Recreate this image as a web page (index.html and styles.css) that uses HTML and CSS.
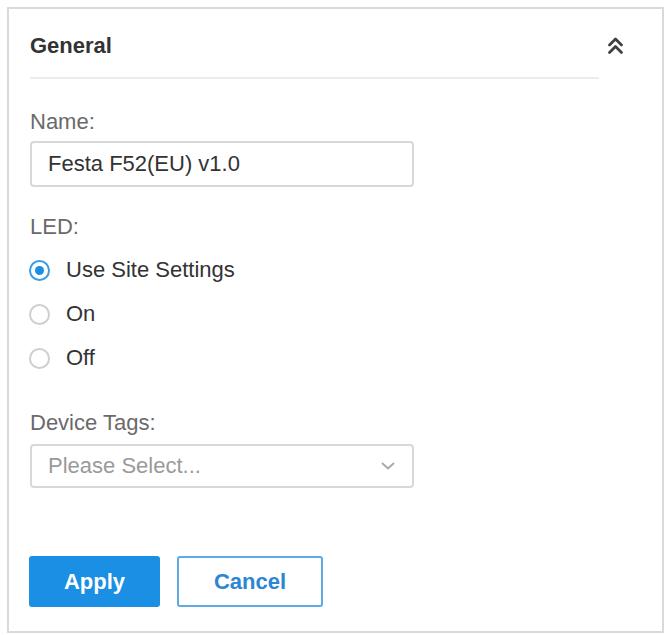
FILE: index.html
```html
<!DOCTYPE html>
<html lang="en">
<head>
<meta charset="utf-8">
<title>General</title>
<link rel="stylesheet" href="styles.css">
</head>
<body>
<section class="panel">
  <header class="panel-header">
    <div class="panel-title">General</div>
    <button class="collapse" type="button" aria-label="Collapse">
      <svg width="17" height="19" viewBox="0 0 17 19" fill="none" stroke="#404040" stroke-width="2.8" stroke-linecap="round" stroke-linejoin="round">
        <path d="M2.5 9 L8.5 3 L14.5 9"/>
        <path d="M2.5 16.5 L8.5 10.5 L14.5 16.5"/>
      </svg>
    </button>
  </header>

  <div class="field">
    <label class="field-label">Name:</label>
    <div class="input">Festa F52(EU) v1.0</div>
  </div>

  <div class="field field-led">
    <label class="field-label">LED:</label>
    <div class="radio-group">
      <div class="radio-row"><span class="radio checked"></span><span class="radio-text">Use Site Settings</span></div>
      <div class="radio-row"><span class="radio"></span><span class="radio-text">On</span></div>
      <div class="radio-row"><span class="radio"></span><span class="radio-text">Off</span></div>
    </div>
  </div>

  <div class="field field-tags">
    <label class="field-label">Device Tags:</label>
    <div class="input select">
      <span class="placeholder">Please Select...</span>
      <svg class="caret" width="14" height="8" viewBox="0 0 14 8" fill="none" stroke="#a8a8a8" stroke-width="1.8" stroke-linecap="round" stroke-linejoin="round">
        <path d="M1.5 1.5 L7 6.5 L12.5 1.5"/>
      </svg>
    </div>
  </div>

  <div class="actions">
    <button class="btn btn-primary" type="button">Apply</button>
    <button class="btn btn-outline" type="button">Cancel</button>
  </div>
</section>
</body>
</html>
```

FILE: styles.css
```css
html, body {
  margin: 0;
  padding: 0;
  background: #ffffff;
}

body {
  font-family: "Liberation Sans", Arial, sans-serif;
  font-size: 22px;
  color: #333333;
}

.panel {
  box-sizing: border-box;
  width: 657px;
  height: 626px;
  margin: 7px 0 0 7px;
  border: 2px solid #dadada;
  padding: 0 0 0 21px;
  background: #ffffff;
}

.panel-header {
  display: flex;
  align-items: flex-start;
}

.panel-title {
  flex: 1;
  padding: 22px 0 16px 0;
  line-height: 30px;
  font-weight: bold;
  color: #333333;
  border-bottom: 2px solid #ececec;
}

.collapse {
  margin: 27px 38px 0 8px;
  padding: 0;
  border: 0;
  background: none;
  width: 17px;
  height: 19px;
  display: flex;
}

.field-label {
  display: block;
  line-height: 30px;
  color: #6a6a6a;
}

.field {
  margin-top: 28px;
  width: 384px;
}

.field-led {
  margin-top: 25px;
}

.input {
  box-sizing: border-box;
  height: 46px;
  margin-top: 4px;
  border: 2px solid #d8d8d8;
  border-radius: 4px;
  padding: 0 16px;
  display: flex;
  align-items: center;
  color: #333333;
}

.radio-group {
  margin-top: 6px;
}

.radio-row {
  height: 44px;
  display: flex;
  align-items: center;
}

.radio {
  box-sizing: border-box;
  width: 21px;
  height: 21px;
  margin-left: -1px;
  border: 2px solid #cfcfcf;
  border-radius: 50%;
  display: flex;
  align-items: center;
  justify-content: center;
}

.radio.checked {
  border: 2.5px solid #3a9be6;
}

.radio.checked::after {
  content: "";
  width: 9px;
  height: 9px;
  border-radius: 50%;
  background: #1a8fe3;
}

.radio-text {
  margin-left: 16px;
  color: #333333;
}

.field-tags {
  margin-top: 28px;
}

.select {
  height: 44px;
  margin-top: 6px;
  justify-content: space-between;
}

.placeholder {
  color: #9a9a9a;
}

.caret {
  margin-right: 1px;
}

.actions {
  display: flex;
  margin-top: 68px;
}

.btn {
  box-sizing: border-box;
  height: 51px;
  border-radius: 3px;
  font-family: "Liberation Sans", Arial, sans-serif;
  font-size: 22px;
  font-weight: bold;
  cursor: pointer;
}

.btn-primary {
  width: 131px;
  margin-left: -1px;
  border: 0;
  background: #1a8fe3;
  color: #ffffff;
}

.btn-outline {
  width: 146px;
  margin-left: 17px;
  border: 2px solid #5eaae6;
  background: #ffffff;
  color: #2b86d3;
}
```
